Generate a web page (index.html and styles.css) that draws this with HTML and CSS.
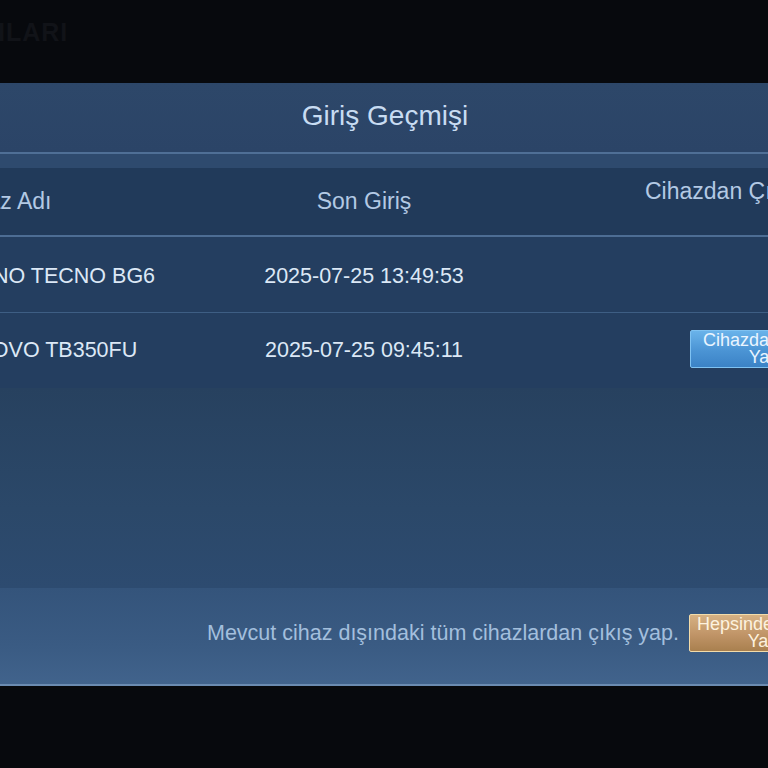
FILE: index.html
```html
<!DOCTYPE html>
<html lang="tr">
<head>
<meta charset="utf-8">
<title>Giriş Geçmişi</title>
<link rel="stylesheet" href="styles.css">
</head>
<body>
<div class="screen">
  <div class="topbar"><span class="ghost">ILARI</span></div>
  <div class="panel">
    <div class="title-bar"><h1 class="title">Giriş Geçmişi</h1></div>
    <div class="band"></div>
    <div class="table">
      <div class="row head">
        <div class="cell c1">Cihaz Adı</div>
        <div class="cell c2">Son Giriş</div>
        <div class="cell c3 up">Cihazdan Çıkış Yap</div>
      </div>
      <div class="row first">
        <div class="cell c1">TECNO TECNO BG6</div>
        <div class="cell c2">2025-07-25 13:49:53</div>
        <div class="cell c3"></div>
      </div>
      <div class="row">
        <div class="cell c1">LENOVO TB350FU</div>
        <div class="cell c2">2025-07-25 09:45:11</div>
        <div class="cell c3"><button class="btn blue">Cihazdan Çıkış Yap</button></div>
      </div>
    </div>
    <div class="fill"></div>
    <div class="footer">
      <span class="note">Mevcut cihaz dışındaki tüm cihazlardan çıkış yap.</span>
      <button class="btn gold">Hepsinden Çıkış Yap</button>
    </div>
  </div>
</div>
</body>
</html>
```
FILE: styles.css
```css
html, body {
  margin: 0;
  padding: 0;
  background: #07090d;
}
body {
  width: 768px;
  height: 768px;
  overflow: hidden;
  font-family: "Liberation Sans", Arial, sans-serif;
}
.screen {
  width: 768px;
  height: 768px;
  overflow: hidden;
}
.topbar {
  height: 83px;
  background: #07090d;
  display: flex;
  align-items: flex-start;
}
.ghost {
  margin-top: 18px;
  margin-left: -2px;
  font-size: 25px;
  font-weight: bold;
  color: #111318;
  letter-spacing: 1px;
}
.panel {
  width: 870px;
  margin-left: -50px;
  background: #26405f;
  border-bottom: 2px solid #6b8bb1;
}
.title-bar {
  height: 69px;
  background: linear-gradient(#2d4769, #2b4467);
  border-bottom: 2px solid #4f6f96;
  display: flex;
  align-items: center;
  justify-content: center;
}
.title {
  margin: 0;
  font-weight: normal;
  font-size: 28px;
  color: #c8dcf2;
  padding-bottom: 4px;
}
.band {
  height: 14px;
  background: #2e4a6e;
}
.row {
  display: grid;
  grid-template-columns: 208px 412px 250px;
  height: 75px;
  align-items: center;
  border-bottom: 1px solid #3e5e84;
  background: #243e60;
  font-size: 21.5px;
  color: #dce8f6;
}
.row.first .c1,
.row.first .c2 {
  padding-top: 4px;
}
.row.head {
  height: 67px;
  background: #213a5a;
  border-bottom: 2px solid #4d6d94;
  font-size: 23px;
  color: #b3c9e4;
}
.row:last-child {
  border-bottom: none;
}
.c1 {
  padding-left: 0;
  white-space: nowrap;
}
.row.head .c1 {
  padding-left: 3px;
}
.c2 {
  text-align: center;
  white-space: nowrap;
}
.c3 {
  white-space: nowrap;
  padding-left: 75px;
}
.up {
  padding-bottom: 20px;
}
.btn {
  width: 148px;
  height: 38px;
  padding: 1px 4px;
  font-family: "Liberation Sans", Arial, sans-serif;
  font-size: 18px;
  line-height: 17px;
  text-align: center;
  white-space: normal;
  border-radius: 2px;
  cursor: pointer;
}
.blue {
  margin-left: 45px;
  margin-bottom: 4px;
  color: #eaf5ff;
  background: linear-gradient(#6ab3ea, #4b94d4 55%, #3b82c6);
  border: 1px solid #7fc2f2;
}
.fill {
  height: 200px;
  background: linear-gradient(#27415f, #2b4869 60%, #2d4b70);
}
.footer {
  height: 96px;
  box-sizing: border-box;
  padding-bottom: 6px;
  background: linear-gradient(#34547b, #3a5b83 60%, #41638c);
  display: flex;
  align-items: center;
  justify-content: flex-end;
  gap: 10px;
  margin-right: -17px;
}
.note {
  font-size: 21.5px;
  color: #a3bfdd;
  white-space: nowrap;
}
.gold {
  color: #fdf2df;
  background: linear-gradient(#d6b183, #c09467 55%, #a9804f);
  border: 1px solid #f3dcaa;
}
```
